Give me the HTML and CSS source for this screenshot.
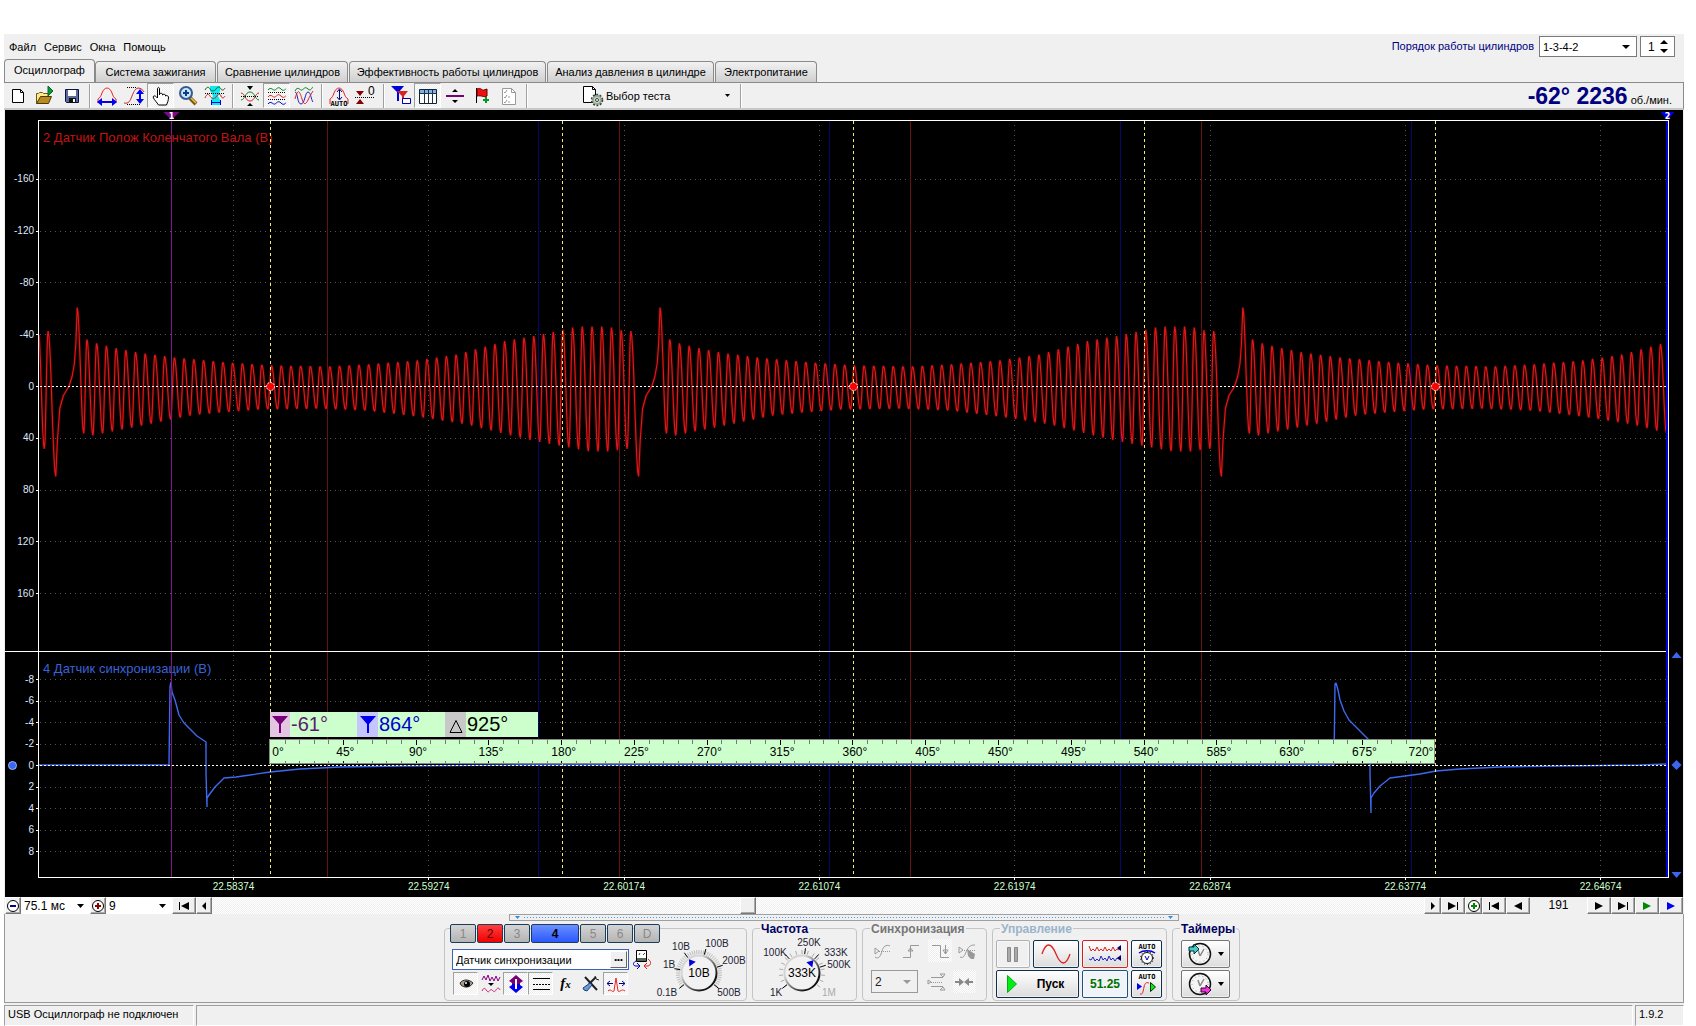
FILE: index.html
```html
<!DOCTYPE html>
<html lang="ru">
<head>
<meta charset="utf-8">
<title>USB Осциллограф</title>
<link rel="stylesheet" href="styles.css">
</head>
<body>
<div class="app">
  <header class="topbar">
    <nav class="menu">
      <button type="button">Файл</button>
      <button type="button">Сервис</button>
      <button type="button">Окна</button>
      <button type="button">Помощь</button>
    </nav>
    <div class="order">
      <label for="order">Порядок работы цилиндров</label>
      <span class="combo order-combo">
        <select id="order"><option>1-3-4-2</option></select>
        <svg class="caret" width="8" height="4" viewBox="0 0 8 4"><path d="M0 0h8l-4 4z"/></svg>
      </span>
      <span class="combo spin">
        <input id="cyl" type="text" value="1" aria-label="Цилиндр">
        <svg class="spin-arrows" width="8" height="13" viewBox="0 0 8 13"><path d="M0 4h8l-4-4zM0 9h8l-4 4z"/></svg>
      </span>
    </div>
  </header>

  <div class="tabs" role="tablist">
    <button type="button" role="tab" class="tab active" aria-selected="true">Осциллограф</button>
    <button type="button" role="tab" class="tab t2">Система зажигания</button>
    <button type="button" role="tab" class="tab t3">Сравнение цилиндров</button>
    <button type="button" role="tab" class="tab t4">Эффективность работы цилиндров</button>
    <button type="button" role="tab" class="tab t5">Анализ давления в цилиндре</button>
    <button type="button" role="tab" class="tab t6">Электропитание</button>
  </div>

  <div class="toolbar">
    <button type="button" class="tool" aria-label="Новый"><svg width="22" height="22" viewBox="0 0 22 22"><path d="M5.500 4.500h8l3 3v10h-11z" fill="#fff" stroke="#000"/><path d="M13.500 4.500v3h3" fill="none" stroke="#000"/></svg></button>
    <button type="button" class="tool" aria-label="Открыть"><svg width="22" height="22" viewBox="0 0 22 22"><path d="M2.500 18.500v-10h2l1-1h3l1 1h5v4" fill="#ffe98a" stroke="#6b5b12"/><path d="M2.500 18.500l4-7h11l-3 7z" fill="#b98a22" stroke="#4a3a08"/><path d="M14 1l5 5-5 5z" fill="#0a9a2a" stroke="#063"/></svg></button>
    <button type="button" class="tool" aria-label="Сохранить"><svg width="22" height="22" viewBox="0 0 22 22"><path d="M4.500 4.500h13v13h-12l-1-1z" fill="#5a6a9a" stroke="#0a1440"/><path d="M7 5h8v6H7z" fill="#fff"/><path d="M8 13h7v5H8z" fill="#111"/><path d="M12 14h2v3h-2z" fill="#fff"/></svg></button>
    <i class="sep"></i>
    <button type="button" class="tool" aria-label="Период"><svg width="22" height="22" viewBox="0 0 22 22"><path d="M2 18v-4c2-1 3-3 4-6s3-5 5-5 4 2 5 5 2 5 4 6v4" fill="none" stroke="#e22"/><path d="M1 17l5-4v3h10v-3l5 4-5 4v-3H6v3z" fill="#00e"/></svg></button>
    <button type="button" class="tool" aria-label="Фронт"><svg width="22" height="22" viewBox="0 0 22 22"><path d="M1 18c5 1 6-2 8-7s3-7 6-8c3 0 5 2 6 4" fill="none" stroke="#c22"/><path d="M4 2.500h10M4 19.500h14" stroke="#000" stroke-dasharray="1 1"/><path d="M17 4l4 5h-3v5h3l-4 5-4-5h3V9h-3z" fill="#00e"/></svg></button>
    <button type="button" class="tool pressed" aria-label="Рука"><svg width="22" height="22" viewBox="0 0 22 22"><path d="M8.500 20c-2-3-4-5-5-7-1-2 1-3 3-1l1 1V4c0-2 2-2 2 0v6-1c1-1 2-1 3 0v1c1-1 2-1 3 0v1c1-1 3 0 3 1 0 4-1 5-2 8z" fill="#fff" stroke="#000"/></svg></button>
    <button type="button" class="tool" aria-label="Масштаб"><svg width="22" height="22" viewBox="0 0 22 22"><path d="M13 13l6 6" stroke="#7a5a10" stroke-width="4"/><path d="M14 13l5 5" stroke="#e8c050" stroke-width="1.500"/><circle cx="9" cy="8" r="6" fill="#c8e4f8" stroke="#345a94" stroke-width="2"/><path d="M6 8h6M9 5v6" stroke="#123a8a" stroke-width="2"/></svg></button>
    <button type="button" class="tool" aria-label="Растянуть"><svg width="22" height="22" viewBox="0 0 22 22"><path d="M6 1h10v5l-2 5 2 4v5H7v-5l2-4-3-5z" fill="#0fe8f0"/><path d="M1 5c2-4 4-3 5-1s4 3 6 0 4-2 5 0 3 1 4-1" fill="none" stroke="#062"/><path d="M1 13c2-5 4-4 5-2s4 4 6 1 4-4 5-1 3 2 4 0" fill="none" stroke="#c22"/><path d="M1 8.500h20" stroke="#000" stroke-dasharray="1 1"/><path d="M7.500 15v5M16.500 15v5M8 17.500h8" stroke="#00c"/></svg></button>
    <i class="sep"></i>
    <button type="button" class="tool" aria-label="Сжать"><svg width="22" height="22" viewBox="0 0 22 22"><path d="M2 8c4 0 4 8 9 8s5-8 9-8" fill="none" stroke="#d22"/><path d="M2 15c4 0 4-8 9-8s5 8 9 8" fill="none" stroke="#082"/><path d="M2 11.500h18" stroke="#000" stroke-dasharray="1 1"/><path d="M8 1h6l-3 4zM8 21h6l-3-3z"/></svg></button>
    <button type="button" class="tool pressed" aria-label="Разделить"><svg width="22" height="22" viewBox="0 0 22 22"><g fill="none"><path d="M2 5c3-4 5 1 7 0s3-4 6-1 4 0 5 0" stroke="#082"/><path d="M2 12c3-4 5 1 7 0s3-4 6-1 4 0 5 0" stroke="#d22"/><path d="M2 19c3-4 5 1 7 0s3-4 6-1 4 0 5 0" stroke="#00c"/><path d="M2 7.500h18M2 14.500h18" stroke="#000" stroke-dasharray="1 1"/></g></svg></button>
    <button type="button" class="tool" aria-label="Наложить"><svg width="22" height="22" viewBox="0 0 22 22"><g fill="none"><path d="M2 6c3-6 5 0 7-1s3-4 6-1 4-2 5-2" stroke="#082"/><path d="M2 7c3 0 2 12 6 12s4-12 7-12 3 8 5 10" stroke="#22c"/><path d="M2 14c3-12 5-7 7 0s4 5 6 1 3-6 5-9" stroke="#d22"/></g></svg></button>
    <i class="sep"></i>
    <button type="button" class="tool" aria-label="Авто"><svg width="22" height="22" viewBox="0 0 22 22"><path d="M2 19v-5c2-1 3-3 4-6s3-5 5-5 4 2 5 5 2 5 4 6v5" fill="none" stroke="#e22"/><path d="M11.500 5v9M9 7l2.500-3L14 7M9 12l2.500 3 2.500-3" fill="none" stroke="#008"/><text x="11" y="21" class="ico-auto" text-anchor="middle">AUTO</text></svg></button>
    <button type="button" class="tool" aria-label="Ноль"><svg width="22" height="22" viewBox="0 0 22 22"><path d="M1 6h8l-4 5zM1 19h8l-4-5z" fill="#800"/><path d="M0 12.500h20" stroke="#000" stroke-dasharray="1 1"/><text x="13" y="10" class="ico-zero">0</text></svg></button>
    <i class="sep"></i>
    <button type="button" class="tool" aria-label="Фильтр"><svg width="22" height="22" viewBox="0 0 22 22"><path d="M1 1h13l-5 6v9H7V7z" fill="#00d"/><path d="M7 6h11l-4 5v8h-2v-8z" fill="#d22"/><path d="M12.500 13.500h8v5h-8z" fill="#fff" stroke="#00a"/></svg></button>
    <button type="button" class="tool pressed" aria-label="Таблица"><svg width="22" height="22" viewBox="0 0 22 22"><path d="M2.500 4.500h17v14h-17z" fill="#fff" stroke="#123"/><path d="M3 5h16v3H3z" fill="#7ab4e8"/><path d="M3 8.500h16M7.500 5v13M11.500 5v13M15.500 5v13" stroke="#234"/></svg></button>
    <button type="button" class="tool" aria-label="Граница"><svg width="22" height="22" viewBox="0 0 22 22"><path d="M2 10h18v2H2z" fill="#707"/><path d="M8 7h6l-3-3zM8 15h6l-3 3z"/></svg></button>
    <button type="button" class="tool" aria-label="Метка"><svg width="22" height="22" viewBox="0 0 22 22"><path d="M5.500 3v15" stroke="#000"/><path d="M6 4c4-2 5 2 7 1l3-1v7c-3 2-5-1-10 0z" fill="#e11" stroke="#600"/><path d="M12 15h6M15 12v6" stroke="#092" stroke-width="2"/></svg></button>
    <button type="button" class="tool" aria-label="Список"><svg width="22" height="22" viewBox="0 0 22 22"><path d="M4.500 3.500h9l4 4v12h-13z" fill="#fff" stroke="#999"/><path d="M13.500 3.500v4h4M6 7l1 1 2-3M6 12l1 1 2-3M6 17l1 1 2-3M10 12h2M10 17h2" fill="none" stroke="#999"/></svg></button>
    <i class="sep"></i>
    <div class="test">
      <svg width="22" height="22" viewBox="0 0 22 22"><path d="M1.500 1.500h9l3 3v13h-12z" fill="#fff" stroke="#000"/><path d="M10.500 1.500v3h3" fill="none" stroke="#000"/><circle cx="15" cy="15" r="4" fill="#cfd8cf" stroke="#9aa89a" stroke-width="2"/><circle cx="15" cy="15" r="5.500" fill="none" stroke="#343" stroke-width="1.500" stroke-dasharray="2 1.500"/><circle cx="15" cy="15" r="1.500" fill="#fff" stroke="#343"/></svg>
      <select aria-label="Выбор теста"><option>Выбор теста</option></select>
      <svg class="caret-s" width="5" height="3" viewBox="0 0 5 3"><path d="M0 0h5l-2.500 3z"/></svg>
    </div>
    <i class="sep"></i>
    <output class="rpm"><b>-62° 2236</b> <span>об./мин.</span></output>
  </div>

  <main class="scope"><svg id="plot" class="plot" role="img" aria-label="Осциллограмма"></svg></main>

  <div class="scroll">
    <button type="button" class="sb w16" aria-label="Уменьшить"><svg width="14" height="14" viewBox="0 0 14 14"><circle cx="7" cy="7" r="5.500" fill="#fff" stroke="#000"/><path d="M4 6h6v2H4z" fill="#008"/></svg></button>
    <span class="combo flat c1"><select aria-label="Длительность"><option>75.1 мс</option></select><svg class="caret-m" width="7" height="4" viewBox="0 0 7 4"><path d="M0 0h7l-3.500 4z"/></svg></span>
    <button type="button" class="sb w16" aria-label="Увеличить"><svg width="14" height="14" viewBox="0 0 14 14"><circle cx="7" cy="7" r="5.500" fill="#fff" stroke="#000"/><path d="M4 6h6v2H4zM6 4h2v6H6z" fill="#800"/></svg></button>
    <span class="combo flat c2"><select aria-label="Масштаб по времени"><option>9</option></select><svg class="caret-m" width="7" height="4" viewBox="0 0 7 4"><path d="M0 0h7l-3.500 4z"/></svg></span>
    <button type="button" class="sb w24" aria-label="В начало"><svg width="12" height="8" viewBox="0 0 12 8"><path d="M1 0h1v8H1zM11 0v8L3 4z"/></svg></button>
    <button type="button" class="sb w16" aria-label="Назад"><svg width="4" height="8" viewBox="0 0 4 8"><path d="M4 0v8L0 4z"/></svg></button>
    <div class="track"><div class="before"></div><div class="thumb"></div><div class="after"></div></div>
    <button type="button" class="sb w17" aria-label="Вперёд"><svg width="4" height="8" viewBox="0 0 4 8"><path d="M0 0v8l4-4z"/></svg></button>
    <button type="button" class="sb w24" aria-label="В конец"><svg width="12" height="8" viewBox="0 0 12 8"><path d="M10 0h1v8h-1zM1 0v8l8-4z"/></svg></button>
    <button type="button" class="sb w17" aria-label="Добавить"><svg width="14" height="14" viewBox="0 0 14 14"><circle cx="7" cy="7" r="5.500" fill="#fff" stroke="#000"/><path d="M4 6h6v2H4zM6 4h2v6H6z" fill="#080"/></svg></button>
    <button type="button" class="sb w24" aria-label="Первый"><svg width="12" height="8" viewBox="0 0 12 8"><path d="M1 0h1v8H1zM11 0v8L3 4z"/></svg></button>
    <button type="button" class="sb w24" aria-label="Предыдущий"><svg width="8" height="8" viewBox="0 0 8 8"><path d="M8 0v8L0 4z"/></svg></button>
    <span class="count">191</span>
    <button type="button" class="sb w24" aria-label="Следующий"><svg width="8" height="8" viewBox="0 0 8 8"><path d="M0 0v8l8-4z"/></svg></button>
    <button type="button" class="sb w24" aria-label="Последний"><svg width="12" height="8" viewBox="0 0 12 8"><path d="M10 0h1v8h-1zM1 0v8l8-4z"/></svg></button>
    <button type="button" class="sb w24" aria-label="Воспроизвести"><svg width="8" height="8" viewBox="0 0 8 8"><path d="M0 0v8l8-4z" fill="#080"/></svg></button>
    <button type="button" class="sb w24" aria-label="Воспроизвести быстро"><svg width="8" height="8" viewBox="0 0 8 8"><path d="M0 0v8l8-4z" fill="#00e"/></svg></button>
  </div>

  <div class="panel">
    <div class="grip"><svg width="5" height="3" viewBox="0 0 5 3"><path d="M0 0h5l-2.500 3z"/></svg><i></i><svg width="5" height="3" viewBox="0 0 5 3"><path d="M0 0h5l-2.500 3z"/></svg></div>
    <div class="groups">
      <section class="group g-chan">
        <div class="chan-col">
          <div class="chans">
            <button type="button" class="ch">1</button>
            <button type="button" class="ch red">2</button>
            <button type="button" class="ch">3</button>
            <button type="button" class="ch blue">4</button>
            <button type="button" class="ch">5</button>
            <button type="button" class="ch">6</button>
            <button type="button" class="ch">D</button>
          </div>
          <div class="name-row">
            <div class="name"><input type="text" value="Датчик синхронизации" aria-label="Имя канала"><button type="button" aria-label="Выбрать">•••</button></div>
            <svg width="18" height="20" viewBox="0 0 18 20"><path d="M3.500 1.500h10v11h-10z" fill="#fff" stroke="#000"/><path d="M4 9h9v3H4z" fill="#565"/><path d="M6 6l1-2M10 6l2-2" stroke="#444"/><path d="M3 12c-4 2-3 5 0 5h3M4 14l3 3-3 3" fill="none" stroke="#00a"/><path d="M15 10c4 3 3 6 0 7h-4M14 14l-3 3 3 3" fill="none" stroke="#d22"/></svg>
          </div>
          <div class="opts">
            <button type="button" class="opt pressed" aria-label="Показать"><svg width="20" height="20" viewBox="0 0 20 20"><path d="M4 9c3-4 9-4 13 0-3 5-9 5-12 2z" fill="#a89c8c" stroke="#222"/><circle cx="11" cy="10" r="3"/><circle cx="10" cy="9" r="1" fill="#fff"/></svg></button>
            <button type="button" class="opt" aria-label="Сгладить"><svg width="20" height="20" viewBox="0 0 20 20"><path d="M1 6l2-4 2 4 2-5 2 6 2-4 2 4 2-5 2 5 2-4" fill="none" stroke="#808"/><path d="M7 9h6l-3 3z"/><path d="M1 17c2-4 3-3 5 0s3-3 5-1 3 2 4 0 3-3 4 0" fill="none" stroke="#c27"/></svg></button>
            <button type="button" class="opt pressed" aria-label="Сдвиг"><svg width="20" height="20" viewBox="0 0 20 20"><path d="M10 1l7 6-3 2v1H6V9L3 7z" fill="#707"/><path d="M10 19l7-6-3-2v-1H6v1l-3 2z" fill="#00e"/><path d="M9 5h2v10H9z" fill="#fff"/></svg></button>
            <button type="button" class="opt pressed" aria-label="Уровни"><svg width="20" height="20" viewBox="0 0 20 20"><path d="M2 4.500h17M2 15.500h17" stroke="#000"/><path d="M2 10.500h17" stroke="#000" stroke-dasharray="2 1"/></svg></button>
            <button type="button" class="opt" aria-label="Функция"><i class="fx">f<small>x</small></i></button>
            <button type="button" class="opt" aria-label="Настройки"><svg width="20" height="20" viewBox="0 0 20 20"><path d="M4 3l12 13M8 10l7-7" stroke="#222" stroke-width="2"/><path d="M14 2l1 3 3 1" fill="none" stroke="#222"/><path d="M9 9l2 2-5 6-3-1-1-2z" fill="#6a9ad8" stroke="#247"/></svg></button>
            <button type="button" class="opt pressed" aria-label="Центр"><svg width="20" height="20" viewBox="0 0 20 20"><path d="M2 17c3-3 4 2 6 0l2-13 2 13c2 2 3-3 7 0" fill="none" stroke="#e22"/><path d="M1 9.500h6M13 9.500h6M4 7L1 9.500 4 12M16 7l3 2.500-3 2.500" fill="none" stroke="#008"/></svg></button>
          </div>
        </div>
        <svg id="dial1" class="dial" width="86" height="70" viewBox="660 930 86 70"></svg>
      </section>

      <section class="group g-freq">
        <h2>Частота</h2>
        <svg id="dial2" class="dial" width="103" height="62" viewBox="753 938 103 62"></svg>
      </section>

      <section class="group g-sync">
        <h2 class="gray">Синхронизация</h2>
        <div class="sync-row">
          <button type="button" class="sy" disabled aria-label="Уровень"><svg width="20" height="20" viewBox="0 0 20 20"><path d="M2 16c4 3 6-2 7-6s4-7 8-5M2 7l4 3-4 3z" class="dis"/><path d="M6 10.500h12" class="dis dash"/></svg></button>
          <button type="button" class="sy" disabled aria-label="Фронт"><svg width="20" height="20" viewBox="0 0 20 20"><path d="M2 16.500h7.500v-12H18M7 10l2.500-3 2.500 3z" class="dis"/></svg></button>
          <button type="button" class="sy pressed" disabled aria-label="Спад"><svg width="20" height="20" viewBox="0 0 20 20"><path d="M2 4.500h8.500v12H19M13 9l2.500 4L18 9zM15.500 4v9" class="dis"/></svg></button>
          <button type="button" class="sy" disabled aria-label="Вручную"><svg width="20" height="20" viewBox="0 0 20 20"><path d="M1 6l4 3-4 3z M2 16c4 2 5-3 7-7s4-5 8-5" class="dis"/><path d="M9 8l8 5-1 5h-3l-3-3z" fill="#999"/><path d="M6 9.500h12" class="dis dash"/></svg></button>
        </div>
        <div class="sync-row second">
          <span class="combo dis-combo"><select disabled aria-label="Канал синхронизации"><option>2</option></select><svg class="caret-m" width="8" height="4" viewBox="0 0 8 4"><path d="M0 0h8l-4 4z" fill="#999"/></svg></span>
          <button type="button" class="sy" disabled aria-label="Задержка"><svg width="20" height="20" viewBox="0 0 20 20"><path d="M4 5.500h12M4 14.500h12M1 8l3 2-3 2zM13 2h5l-2 3zM13 18h5l-2-3z" class="dis"/><path d="M4 10.500h12" class="dis dash"/></svg></button>
          <button type="button" class="sy pressed" disabled aria-label="Сжать"><svg width="20" height="20" viewBox="0 0 20 20"><path d="M1 9h4V6l5 4-5 4v-3H1zM19 9h-4V6l-5 4 5 4v-3h4z" fill="#888"/></svg></button>
        </div>
      </section>

      <section class="group g-ctl">
        <h2 class="pale">Управление</h2>
        <div class="ctl">
          <button type="button" class="cb off" disabled aria-label="Пауза"><svg width="12" height="15" viewBox="0 0 12 15"><path d="M.5.500h3v14h-3zM7.500.500h3v14h-3z" fill="#aaa" stroke="#888"/></svg></button>
          <button type="button" class="cb" aria-label="Синус"><svg width="30" height="20" viewBox="0 0 30 20"><path d="M1 10C5-2 10-2 15 10s10 12 14 0" fill="none" stroke="#d22" stroke-width="1.300"/></svg></button>
          <button type="button" class="cb redb" aria-label="Поток"><svg width="34" height="20" viewBox="0 0 34 20"><path d="M1 2l2 5 2-2 2 2 2-4 2 4 2-2 2 2 2-4 2 4 2-2 2 2 2-4 2 4 2-2 2 1" fill="none" stroke="#d22"/><path d="M1 15l2 1 2-3 2 4 2-2 2 2 2-5 2 4 2-2 2 3 2-5 2 4 2-2 2 3 2-3 2 1" fill="none" stroke="#22c"/><path d="M33 1v6l-4-3zM33 11v6l-4-3z" fill="#006"/></svg></button>
          <button type="button" class="cb" aria-label="Авто диапазон"><svg width="20" height="24" viewBox="0 0 20 24"><text x="10" y="7" class="ico-auto" text-anchor="middle">AUTO</text><path d="M2 11c4-3 12-3 16 0" fill="none" stroke="#00d" stroke-width="1.500"/><circle cx="10" cy="16" r="5.500" fill="#fff" stroke="#111"/><circle cx="10" cy="16" r="6.500" fill="none" stroke="#111" stroke-dasharray="1 2"/><path d="M8 14l2 4 2-4" fill="none" stroke="#00a"/></svg></button>
          <button type="button" class="cb start"><svg width="10" height="18" viewBox="0 0 10 18"><path d="M.5.500v17l9-8.500z" fill="#0e1" stroke="#0a2"/></svg><span>Пуск</span></button>
          <output class="cb val">51.25</output>
          <button type="button" class="cb" aria-label="Авто запуск"><svg width="20" height="24" viewBox="0 0 20 24"><text x="10" y="7" class="ico-auto" text-anchor="middle">AUTO</text><path d="M3 22c3 1 3-3 4-7s2-5 5-4" fill="none" stroke="#d22"/><path d="M0 11l5 3.500L0 18z" fill="#00e"/><path d="M13.500 10.500v9l5-4.500z" fill="#0e1" stroke="#030"/></svg></button>
        </div>
      </section>

      <section class="group g-tim">
        <h2>Таймеры</h2>
        <div class="tim">
          <button type="button" class="cb tb" aria-label="Таймер запуска"><svg width="24" height="24" viewBox="0 0 24 24"><circle cx="12" cy="12" r="10.500" fill="#f4f4f4" stroke="#111" stroke-width="1.500"/><circle cx="12" cy="12" r="8" fill="none" stroke="#999" stroke-dasharray="1 3"/><path d="M12 14l-2-6M12 14l4-7" fill="none" stroke="#888" stroke-width="1.500"/><path d="M1 5h5V2l5 5-5 5V9H1z" fill="#4cc" stroke="#033"/></svg><svg class="tc" width="6" height="4" viewBox="0 0 6 4"><path d="M0 0h6l-3 4z"/></svg></button>
          <button type="button" class="cb tb" aria-label="Таймер остановки"><svg width="24" height="24" viewBox="0 0 24 24"><circle cx="12" cy="12" r="10.500" fill="#f4f4f4" stroke="#111" stroke-width="1.500"/><circle cx="12" cy="12" r="8" fill="none" stroke="#999" stroke-dasharray="1 3"/><path d="M12 14l-2-6M12 14l4-7" fill="none" stroke="#888" stroke-width="1.500"/><path d="M13 16h5v-3l5 5-5 5v-3h-5z" fill="#e3d" stroke="#303"/></svg><svg class="tc" width="6" height="4" viewBox="0 0 6 4"><path d="M0 0h6l-3 4z"/></svg></button>
        </div>
      </section>
    </div>
  </div>

  <footer class="status">
    <span class="s1">USB Осциллограф не подключен</span>
    <span class="s2"></span>
    <span class="s3">1.9.2</span>
  </footer>
</div>
<script src="scope.js"></script>
</body>
</html>
```
FILE: styles.css
```css
* { box-sizing: border-box; }
html, body { margin: 0; height: 100%; background: #fff; }
body { font-family: "Liberation Sans", Arial, sans-serif; font-size: 12px; line-height: 16px; color: #000; }
button, select, input { font: inherit; color: inherit; margin: 0; padding: 0; border: 0; background: none; border-radius: 0; }
select { appearance: none; outline: 0; }
svg { display: block; flex: none; }
i { font-style: normal; }

.app { display: flex; flex-direction: column; min-height: 100vh; padding: 34px 12px 0 4px; background: #f0f0f0 content-box; }

.topbar { display: flex; justify-content: space-between; height: 25px; padding-top: 1px; font-size: 11px; }
.menu { display: flex; gap: 8px; padding-left: 5px; align-items: center; }
.order { display: flex; align-items: flex-start; padding: 1px 9px 0 0; }
.order label { color: #000080; margin-right: 5px; line-height: 21px; }
.combo { position: relative; display: flex; align-items: center; background: #fff; border: 1px solid #7a7a7a; height: 21px; font-size: 12px; }
.combo select, .combo input { flex: 1; min-width: 0; width: 100%; height: 100%; padding-left: 3px; }
.order-combo { width: 98px; margin-right: 3px; font-size: 11px; }
.caret { margin-right: 6px; }
.spin { width: 35px; }
.spin input { padding-left: 7px; }
.spin-arrows { margin-right: 6px; }

.tabs { display: flex; align-items: flex-end; gap: 1px; height: 23px; }
.tab { height: 21px; width: 121px; border: 1px solid #8a8a8a; border-bottom: 0; border-radius: 4px 4px 0 0; background: linear-gradient(#f2f2f2, #cfcfcf); white-space: nowrap; font-size: 11px; }
.tab.active { width: 91px; height: 23px; background: #f0f0f0; margin-right: -1px; padding-bottom: 2px; }
.t3 { width: 131px; }
.t4 { width: 197px; }
.t5 { width: 167px; }
.t6 { width: 102px; }

.toolbar { display: flex; align-items: center; height: 28px; border: 1px solid #8a8a8a; border-left: 0; border-bottom: 2px solid #c8c8c8; }
.tool { width: 27px; height: 25px; display: flex; align-items: center; justify-content: center; flex: none; }
.pressed { background: repeating-conic-gradient(#fff 0 25%, #ededed 0 50%) 0 0 / 2px 2px; border: 1px solid; border-color: #a0a0a0 #fff #fff #a0a0a0; }
.sep { flex: none; width: 8px; height: 24px; border-left: 1px solid #a0a0a0; box-shadow: inset 1px 0 #fff; margin-left: 4px; margin-right: -4px; }
.ico-auto { font: bold 7px "DejaVu Sans Mono", monospace; }
.ico-zero { font: 12px "Liberation Sans", sans-serif; }
.test { display: flex; align-items: center; width: 202px; margin-left: 4px; padding: 0 6px 0 48px; font-size: 11px; }
.test select { flex: 1; padding-left: 2px; }
.rpm { margin-left: auto; padding-right: 11px; display: flex; align-items: baseline; gap: 3px; font-size: 11px; }
.rpm b { font-size: 23px; line-height: 24px; color: #000080; }

.scope { flex: 1; min-height: 500px; background: #000; display: flex; margin: 0 1px; }
.plot { flex: 1; width: 100%; height: auto; min-width: 0; }
.plot text { font-family: "Liberation Sans", sans-serif; }
.plot .axis { font-size: 10px; fill: #dfe8ff; }
.plot .time { font-size: 10px; fill: #cfffcf; }
.plot .title { font-size: 13px; }
.plot .deg { font-size: 12px; fill: #000; }
.plot .read { font-size: 20px; }
.plot .mark { font: bold 8px "DejaVu Sans", sans-serif; fill: #fff; }

.scroll { display: flex; height: 17px; padding: 0 1px; background: #f0f0f0; }
.sb { flex: none; display: flex; align-items: center; justify-content: center; border: 1px solid; border-color: #fff #777 #777 #fff; box-shadow: inset -1px -1px #aaa; background: #f0f0f0; }
.w16 { width: 16px; }
.w17 { width: 17px; }
.w24 { width: 24px; }
.flat { border: 0; height: 17px; }
.c1 { width: 69px; }
.c2 { width: 66px; }
.caret-m { margin-right: 6px; }
.track { flex: 1; display: flex; background: repeating-conic-gradient(#fff 0 25%, #f0f0f0 0 50%) 0 0 / 2px 2px; }
.before { flex: 528; }
.after { flex: 668; }
.thumb { flex: 0 0 16px; background: #f0f0f0; border: 1px solid; border-color: #fff #777 #777 #fff; box-shadow: inset -1px -1px #aaa; }
.count { width: 57px; text-align: center; }

.panel { border: 1px solid #999; border-width: 0 1px 1px; }
.grip { width: 670px; max-width: 100%; height: 7px; margin: 0 auto; border: 1px solid #a0a0a0; display: flex; align-items: center; justify-content: space-between; padding: 0 5px; fill: #2f8fe0; }
.grip i { flex: 1; height: 1px; margin: 0 4px; background: repeating-linear-gradient(90deg, #4a9be8 0 1px, transparent 1px 3px); }
.groups { display: flex; justify-content: center; gap: 5px; padding: 7px 4px 1px 0; }
.group { border: 1px solid #c4c4c4; border-radius: 4px; height: 73px; flex: none; }
.group h2 { width: max-content; margin: -8px 0 0 7px; padding: 0 1px; font-size: 12px; line-height: 16px; height: 16px; color: #000060; background: #f0f0f0; }
.group h2.gray { color: #777; }
.group h2.pale { color: #9ab4cc; }
.g-chan { width: 303px; display: flex; padding-left: 5px; }
.chan-col { width: 210px; margin-top: -5px; }
.chans { display: flex; gap: 1px; }
.ch { width: 26px; height: 19px; border: 1px solid #1c3c5c; border-radius: 2px; background: linear-gradient(#d4d4d4, #b4b4b4); color: #888; }
.ch.red { background: linear-gradient(#ff4040, #f00000); color: #500; }
.ch.blue { width: 48px; background: linear-gradient(#6a90ff, #2a58ff); color: #000; font-weight: bold; }
.name-row { display: flex; gap: 4px; margin: 6px 0 0 2px; }
.name { display: flex; width: 177px; height: 21px; border: 1px solid #3a62b8; background: #fff; padding: 1px; font-size: 11px; }
.name input { flex: 1; min-width: 0; padding-left: 2px; outline: 0; }
.name button { width: 17px; font-size: 8px; line-height: 12px; background: #f0f0f0; border: 1px solid; border-color: #fff #666 #666 #fff; }
.opts { display: flex; margin: 2px 0 0 3px; }
.opt { width: 25px; height: 23px; display: flex; align-items: center; justify-content: center; }
.fx { font: italic bold 15px "Liberation Serif", serif; }
.fx small { font-size: 11px; }
.dial { overflow: visible; }
.dial text { font: 10px "Liberation Sans", sans-serif; text-anchor: middle; fill: #223; }
.dial text.big { font-size: 12px; fill: #000; }
.dial text.off { fill: #aaa; }
.g-freq { width: 105px; }
.g-sync { width: 125px; }
.sync-row { display: flex; justify-content: space-between; padding: 2px 6px 0 8px; height: 26px; }
.sy { width: 24px; height: 23px; display: flex; align-items: center; justify-content: center; }
.sy.pressed { border: 0; }
.dis { fill: none; stroke: #999; }
.dash { stroke-dasharray: 1 1; }
.dis-combo { width: 48px; height: 23px; border-color: #999; background: #f0f0f0; }
.dis-combo select { opacity: 1; color: #222; }
.sync-row.second { padding-top: 7px; height: 32px; }
.second .dis-combo { margin-right: 8px; }
.second .sy { margin-right: 4px; }
.g-ctl { width: 175px; }
.ctl { display: grid; grid-template-columns: 34px 46px 46px 31px; grid-template-rows: 28px 28px; gap: 2px 3px; padding: 3px 3px 0; }
.cb { display: flex; align-items: center; justify-content: center; border: 1px solid #103050; border-radius: 2px; background: linear-gradient(#fff, #dcdcdc); box-shadow: inset 0 0 0 1px #fff8; }
.cb.off { border-color: #b0b0b0; background: #f0f0f0; }
.redb { border-color: #d02020; }
.start { grid-column: span 2; font-weight: bold; }
.start span { margin: 0 4px 0 20px; }
.val { border-color: #205080; color: #007000; font-weight: bold; background: #f0f4f8; }
.g-tim { width: 68px; }
.tim { display: grid; grid-template-rows: 28px 28px; gap: 2px; padding: 3px 9px 0 8px; }
.tb { border-color: #777; gap: 6px; }

.status { display: flex; gap: 2px; height: 23px; padding-top: 2px; font-size: 11px; }
.status span { border: 1px solid; border-color: #a0a0a0 #fff #fff #a0a0a0; padding-left: 3px; line-height: 17px; white-space: nowrap; }
.s1 { width: 190px; }
.s2 { flex: 1; }
.s3 { width: 49px; }
```
FILE: scope.js
```js
(function () {
  var NS = 'http://www.w3.org/2000/svg';
  var svg = document.getElementById('plot');

  function add(parent, tag, attrs, text) {
    var el = document.createElementNS(NS, tag);
    for (var k in attrs) el.setAttribute(k, attrs[k]);
    if (text !== undefined) el.textContent = text;
    parent.appendChild(el);
    return el;
  }

  // Amplitude envelopes over one crank revolution: [offset from the spike, amplitude]
  var REV = 582.8, TOOTH = REV / 60, FIRST = 77.2;
  var TOP = [[0, 48], [10, 47], [20, 43], [40, 38], [60, 34], [97, 29], [150, 24], [194, 21], [250, 20], [290, 22], [340, 26], [380, 32], [430, 46], [460, 51], [500, 60], [530, 60], [545, 56], [560, 55]];
  var LOW = [[0, 47], [16, 49], [25, 47], [55, 41], [84, 35], [113, 29], [143, 26], [181, 23], [240, 22], [290, 24], [340, 30], [390, 38], [426, 47], [455, 54], [513, 65], [530, 65], [560, 61]];

  function lerp(table, x) {
    for (var i = 1; i < table.length; i++) {
      if (x <= table[i][0]) {
        var a = table[i - 1], b = table[i];
        return a[1] + (b[1] - a[1]) * (x - a[0]) / (b[0] - a[0]);
      }
    }
    return table[table.length - 1][1];
  }

  function crankPoints() {
    var ext = [];
    for (var n = -1; n < 3; n++) {
      var s = FIRST + REV * n;
      ext.push([s, 79], [s + 6.5, -47]);
      for (var k = 1; k <= 57; k++) {
        ext.push([s + k * TOOTH, lerp(TOP, k * TOOTH)]);
        if (k < 57) ext.push([s + k * TOOTH + 6, -lerp(LOW, k * TOOTH + 6)]);
      }
      ext.push([s + 561.4, -90, 1], [s + 563, -54, 1], [s + 565.4, -22, 1], [s + 569, -9, 1], [s + 574.5, 0, 1], [s + 577.7, 10, 1], [s + 580, 23, 1], [s + 581.4, 42, 1]);
    }
    var out = [];
    for (var i = 1; i < ext.length; i++) {
      var a = ext[i - 1], b = ext[i];
      var steps = a[2] ? 1 : 8;
      for (var j = 0; j < steps; j++) {
        var t = j / steps, x = a[0] + (b[0] - a[0]) * t;
        if (x < 39 || x > 1667) continue;
        out.push([x, 386.5 - (a[1] + (b[1] - a[1]) * (1 - Math.cos(Math.PI * t)) / 2)]);
      }
    }
    return out;
  }

  var SYNC = [[39, 765], [169, 765], [170, 687], [171, 682], [172, 692], [175, 700], [179, 715], [184, 723], [189, 728], [197, 736], [203, 740], [206, 742], [206, 773], [207, 807], [207, 798], [209, 795], [215, 787], [224, 778], [236, 777], [250, 775], [270, 772], [300, 769], [340, 767], [400, 766], [520, 765], [1334, 765], [1335, 684], [1336, 683], [1338, 690], [1340, 700], [1344, 711], [1349, 720], [1355, 726], [1368, 739], [1370, 742], [1370, 772], [1371, 813], [1371, 798], [1374, 793], [1380, 786], [1390, 778], [1405, 776], [1420, 774], [1436, 771], [1460, 769], [1500, 767], [1560, 766], [1640, 765], [1667, 764]];

  function draw() {
    var w = svg.clientWidth, h = svg.clientHeight;
    var kx = w / 1678, ky = h / 787;
    function X(v) { return (v - 5) * kx; }
    function Y(v) { return (v - 110) * ky; }
    svg.textContent = '';

    function line(x1, y1, x2, y2, stroke, dash, width) {
      var a = { x1: X(x1), y1: Y(y1), x2: X(x2), y2: Y(y2), stroke: stroke, 'stroke-width': width || 1, 'shape-rendering': 'crispEdges' };
      if (dash) a['stroke-dasharray'] = dash;
      return add(svg, 'line', a);
    }
    function text(x, y, cls, str, anchor, fill) {
      var a = { x: X(x), y: Y(y), 'class': cls, 'text-anchor': anchor || 'start' };
      if (fill) a.fill = fill;
      add(svg, 'text', a, str);
    }
    function poly(points, stroke, width, opacity) {
      add(svg, 'polyline', {
        points: points.map(function (p) { return X(p[0]).toFixed(1) + ',' + Y(p[1]).toFixed(1); }).join(' '),
        fill: 'none', stroke: stroke, 'stroke-width': width, opacity: opacity || 1, 'stroke-linejoin': 'bevel'
      });
    }
    function shape(x, y, d, fill) {
      add(svg, 'path', { d: d, fill: fill, transform: 'translate(' + X(x) + ' ' + Y(y) + ')' });
    }

    var i, x, y;
    for (i = -4; i <= 4; i++) {
      y = 386.5 + i * 51.8;
      if (i) line(40, y, 1667, y, '#555', '1 4');
      line(36, y, 38, y, '#fff');
      text(34, y + 3, 'axis', String(i * 40), 'end');
      y = 765.5 + i * 21.5;
      if (i) line(40, y, 1667, y, '#555', '1 4');
      line(36, y, 38, y, '#fff');
      text(34, y + 3, 'axis', String(i * 2), 'end');
    }
    for (i = 0; i < 8; i++) {
      x = 233.5 + i * 195.3;
      line(x, 125, x, 876, '#555', '1 4');
      line(x, 877, x, 880, '#fff');
      text(x, 890, 'time', (22.58374 + i * 0.009).toFixed(5), 'middle');
    }

    text(43, 142, 'title', '2 Датчик Полож Коленчатого Вала (В)', 'start', '#c01414');
    text(43, 673, 'title', '4 Датчик синхронизации (В)', 'start', '#3a62d8');

    [327.5, 619.5, 910.5, 1201.5].forEach(function (v) { line(v, 121, v, 877, '#641212'); });
    [538.5, 829.5, 1120.5, 1411.5].forEach(function (v) { line(v, 121, v, 877, '#06066e'); });

    var crank = crankPoints();
    poly(crank, '#a00000', 3, 0.3);
    poly(crank, '#dc1818', 1.2);
    poly(SYNC, '#3c6af0', 1.4);

    [270.5, 562.5, 853.5, 1144.5, 1435.5].forEach(function (v) { line(v, 121, v, 877, '#f0ee70', '3 3'); });
    line(40, 386.5, 1667, 386.5, '#fff', '2 2');
    line(40, 765.5, 1667, 765.5, '#fff', '2 2');
    line(171.5, 121, 171.5, 877, '#7a1a86');

    line(38.5, 120, 38.5, 877, '#fff');
    line(38, 120.5, 1669, 120.5, '#fff');
    line(5, 651.5, 1669, 651.5, '#fff');
    line(38, 877.5, 1669, 877.5, '#fff');
    line(1668.5, 120, 1668.5, 878, '#fff');
    line(1667, 121, 1667, 877, '#0000d8', null, 2);

    [270.5, 853.5, 1435.5].forEach(function (v) {
      add(svg, 'circle', { cx: X(v), cy: Y(386.5), r: 4, fill: '#f00', stroke: '#fff', 'stroke-dasharray': '2 1' });
    });
    shape(171.5, 112, 'M-8 0H8L0 8z', '#7a0a86');
    text(171.5, 119, 'mark', '1', 'middle');
    shape(1667.5, 112, 'M-7 0H7L0 8z', '#0000e8');
    text(1667.5, 119, 'mark', '2', 'middle');
    shape(1676.5, 652, 'M-5 6H5L0 0z', '#3a66f0');
    shape(1676.5, 765, 'M-5 0L0 -5L5 0L0 5z', '#3a66f0');
    shape(1676.5, 872, 'M-5 0H5L0 6z', '#3a66f0');
    add(svg, 'circle', { cx: X(12.5), cy: Y(765.5), r: 4, fill: '#3a66f0', stroke: '#9ab8ff' });

    function rect(x1, y1, x2, y2, fill, stroke) {
      add(svg, 'rect', { x: X(x1), y: Y(y1), width: (x2 - x1) * kx, height: (y2 - y1) * ky, fill: fill, stroke: stroke || 'none', 'shape-rendering': 'crispEdges' });
    }
    rect(270, 712, 538, 737, '#ccffcc');
    rect(270, 712, 290, 737, '#e2c6e2');
    rect(357, 712, 378, 737, '#c6c6ff');
    rect(445, 712, 466, 737, '#c8c8c8');
    shape(280, 716, 'M-8 0H8L1 8V17H-1V8z', '#7a007a');
    shape(368, 716, 'M-8 0H8L1 8V17H-1V8z', '#0000f0');
    add(svg, 'path', { d: 'M-6 12.500H6L0 .5z', fill: 'none', stroke: '#000', transform: 'translate(' + X(456) + ' ' + Y(720) + ')' });
    text(291, 731, 'read', '-61°', 'start', '#5c1a6c');
    text(379, 731, 'read', '864°', 'start', '#0000d0');
    text(467, 731, 'read', '925°', 'start', '#000');

    rect(269.5, 739.5, 1434.5, 763.5, '#ccffcc', '#888');
    for (i = 1; i < 80; i++) {
      x = 270.5 + i * 14.56;
      var main = i % 5 === 0;
      line(x, 740, x, main ? 745 : 744, main ? '#000' : '#777');
      line(x, 761, x, 763, main ? '#000' : '#777');
    }
    for (i = 0; i <= 16; i++) {
      x = 272.5 + i * 72.8;
      if (i === 0) x = 278;
      if (i === 16) x = 1421;
      text(x, 756, 'deg', i * 45 + '°', 'middle');
    }
  }

  function dial(id, cx, cy, value, pointer, labels, ticks) {
    var s = document.getElementById(id);
    s.innerHTML = '<defs><linearGradient id="' + id + 'g" x1="0" y1="0" x2="1" y2="1"><stop offset="0.3" stop-color="#d4d4d4"/><stop offset="0.8" stop-color="#111"/></linearGradient></defs>';
    ticks.forEach(function (t) {
      var r = t[0] * Math.PI / 180, c = Math.sin(r), d = -Math.cos(r);
      add(s, 'line', { x1: cx + c * 19, y1: cy + d * 19, x2: cx + c * t[1], y2: cy + d * t[1], stroke: t[2] });
    });
    add(s, 'circle', { cx: cx, cy: cy, r: 17.5, fill: '#f2f2f2', stroke: 'url(#' + id + 'g)', 'stroke-width': 2 });
    add(s, 'path', { d: 'M0-17L4-11H-4z', fill: '#00d', transform: 'translate(' + cx + ' ' + cy + ') rotate(' + pointer + ')' });
    add(s, 'text', { x: cx, y: cy + 4, 'class': 'big' }, value);
    labels.forEach(function (l) {
      add(s, 'text', { x: l[0], y: l[1] + 4, 'class': l[3] || '' }, l[2]);
    });
  }

  var t1 = [], t2 = [], a;
  for (a = -126; a <= 126; a += 6) t1.push([a, 23, '#bbb']);
  [-128, -80, -36, 16, 72, 128].forEach(function (v) { t1.push([v, 25, '#000']); });
  for (a = -128; a <= 128; a += 16) t2.push([a, 23, '#aaa']);
  [-128, -42, 8, 42, 72].forEach(function (v) { t2.push([v, 25, '#000']); });

  dial('dial1', 699, 974, '10В', -36, [[667, 993, '0.1В'], [669, 965, '1В'], [681, 947, '10В'], [717, 944, '100В'], [734, 961, '200В'], [729, 993, '500В']], t1);
  dial('dial2', 802, 974, '333K', 42, [[776, 993, '1K'], [775, 953, '100K'], [809, 943, '250K'], [836, 953, '333K'], [839, 965, '500K'], [829, 993, '1M', 'off']], t2);

  draw();
  window.addEventListener('resize', draw);
})();
```
